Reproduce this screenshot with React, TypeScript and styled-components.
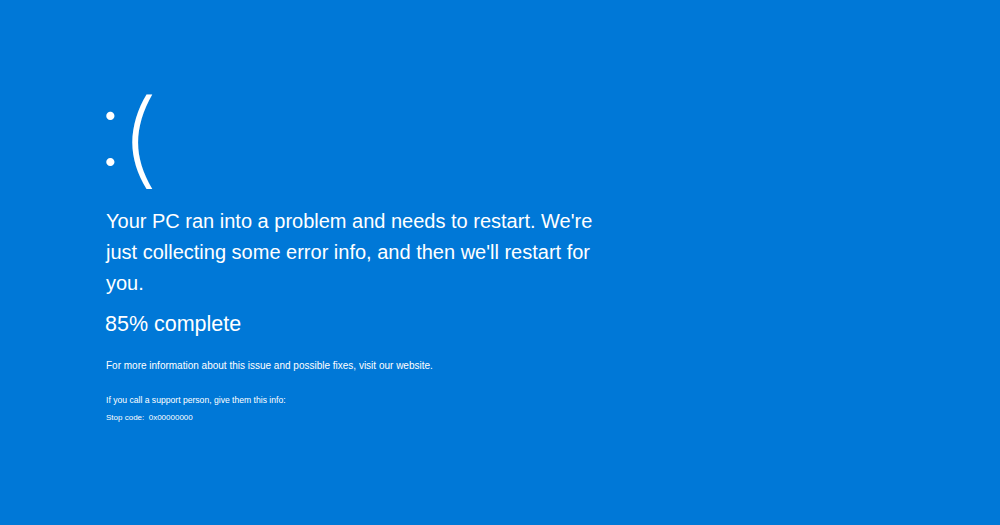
import styled, { createGlobalStyle } from 'styled-components';

const GlobalStyle = createGlobalStyle`
  html, body {
    margin: 0;
    padding: 0;
    background: #0078d7;
  }
  body {
    font-family: "Liberation Sans", Arial, sans-serif;
    color: #fff;
  }
`;

const Screen = styled.main`
  width: 1000px;
  height: 525px;
  background: #0078d7;
  box-sizing: border-box;
  padding: 76px 0 0 106px;
  display: flex;
  flex-direction: column;
  overflow: hidden;
`;

const Frown = styled.div`
  font-family: Inter, "Liberation Sans", sans-serif;
  font-weight: 200;
  font-size: 104px;
  line-height: 122px;
  letter-spacing: -6px;
  margin-left: -10px;
`;

const Eyes = styled.span`
  display: inline-block;
  transform: translateY(-10px);
`;

const Mouth = styled.span`
  display: inline-block;
  transform: scaleX(1.22);
  transform-origin: left center;
  margin-left: -1px;
`;

const Message = styled.p`
  margin: 0;
  margin-top: 8px;
  width: 520px;
  font-size: 20px;
  line-height: 31px;
`;

const Progress = styled.p`
  margin: 0;
  margin-top: 13px;
  font-size: 21.5px;
  line-height: 24px;
  margin-left: -1px;
`;

const Note = styled.p<{ $size: number; $gap: number }>`
  margin: 0;
  margin-top: ${(p) => p.$gap}px;
  font-size: ${(p) => p.$size}px;
  line-height: 14px;
`;

export default function App() {
  return (
    <>
      <GlobalStyle />
      <Screen>
        <Frown>
          <Eyes>:</Eyes>
          <Mouth>(</Mouth>
        </Frown>
        <Message>
          Your PC ran into a problem and needs to restart. We're just
          collecting some error info, and then we'll restart for you.
        </Message>
        <Progress>85% complete</Progress>
        <Note $size={10} $gap={23}>
          For more information about this issue and possible fixes, visit our
          website.
        </Note>
        <Note $size={8.6} $gap={20}>
          If you call a support person, give them this info:
        </Note>
        <Note $size={8} $gap={4}>
          Stop code:&nbsp; 0x00000000
        </Note>
      </Screen>
    </>
  );
}
